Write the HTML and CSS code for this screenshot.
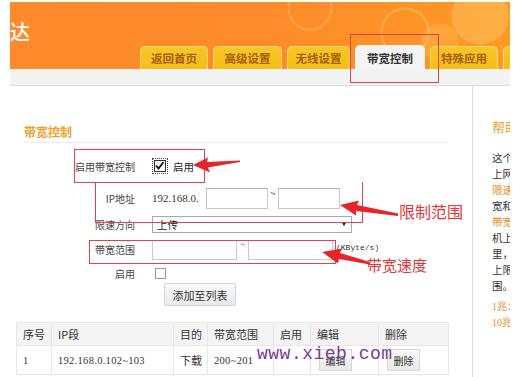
FILE: index.html
```html
<!DOCTYPE html>
<html lang="zh">
<head>
<meta charset="utf-8">
<title>带宽控制</title>
<link rel="stylesheet" href="styles.css">
</head>
<body>
<div class="page">
  <header class="header">
    <div class="logo">达</div>
    <nav class="tabs">
      <div class="tab w68">返回首页</div>
      <div class="tab w69">高级设置</div>
      <div class="tab w63">无线设置</div>
      <div class="tab active">带宽控制</div>
      <div class="tab w68">特殊应用</div>
      <div class="tab w60"></div>
    </nav>
  </header>
  <div class="subbar"></div>
  <div class="body">
    <main class="main">
      <h2 class="title">带宽控制</h2>
      <div class="form">
        <div class="lbl h34">启用带宽控制</div>
        <div class="val h34"><span class="cb checked"><svg viewBox="0 0 11 11" width="11" height="11"><path d="M2 5.5 L4.5 8.5 L9.5 2" fill="none" stroke="#111" stroke-width="1.8"/></svg></span><span class="cbtext">启用</span></div>

        <div class="lbl h30">IP地址</div>
        <div class="val h30"><span class="ipfix">192.168.0.</span><input class="inp w62" type="text"><span class="tilde">~</span><input class="inp w62" type="text"></div>

        <div class="lbl h23">限速方向</div>
        <div class="val h23"><div class="select"><span>上传</span><span class="caret"></span></div></div>

        <div class="lbl h27">带宽范围</div>
        <div class="val h27"><input class="inp w85" type="text"><span class="tilde2">~</span><input class="inp w85" type="text"><span class="unit">(KByte/s)</span></div>

        <div class="lbl h20">启用</div>
        <div class="val h20"><span class="cb plain"></span></div>
      </div>
      <div class="btnrow"><button class="btn" type="button">添加至列表</button></div>
      <table class="list">
        <colgroup>
          <col class="c1"><col class="c2"><col class="c3"><col class="c4"><col class="c5"><col class="c6"><col class="c7">
        </colgroup>
        <thead>
          <tr><th>序号</th><th>IP段</th><th>目的</th><th>带宽范围</th><th>启用</th><th>编辑</th><th>删除</th></tr>
        </thead>
        <tbody>
          <tr><td class="num">1</td><td class="num">192.168.0.102~103</td><td>下载</td><td class="num">200~201</td><td></td><td><button class="sbtn" type="button">编辑</button></td><td><button class="sbtn" type="button">删除</button></td></tr>
        </tbody>
      </table>
    </main>
    <aside class="side">
      <h3 class="side-title">帮助</h3>
      <div class="side-text">
        <p>这个</p>
        <p>上网</p>
        <p class="hl">限速</p>
        <p>宽和</p>
        <p class="hl">带宽</p>
        <p>机上</p>
        <p>里，</p>
        <p>上限</p>
        <p>围。</p>
      </div>
      <div class="side-note">
        <p>1兆：</p>
        <p>10兆</p>
      </div>
    </aside>
  </div>
</div>

<div class="annot">
  <div class="box box-tab"></div>
  <div class="box box-enable"></div>
  <div class="box box-ip"></div>
  <div class="box box-range"></div>
  <svg class="arrows" width="522" height="377" viewBox="0 0 522 377">
    <polygon points="193,165 208,157.5 207,162 240,160.5 240,162 208,167.5 210,172.5" fill="#e8232b"/>
    <polygon points="340,205 359,200.5 357,205 398,213.5 398,216 356,211 356,215.5" fill="#e8232b"/>
    <polygon points="322,252 342,248.5 340,253 370,262 370,264.5 339,259 338,263.5" fill="#e8232b"/>
  </svg>
  <div class="note note-ip">限制范围</div>
  <div class="note note-bw">带宽速度</div>
  <div class="watermark">www.xieb.com</div>
</div>
</body>
</html>
```

FILE: styles.css
```css
* { box-sizing: border-box; }
html, body { margin: 0; padding: 0; background: #fff; }
body {
  width: 522px;
  height: 377px;
  overflow: hidden;
  position: relative;
  font-family: "Noto Sans CJK SC", "Noto Sans", sans-serif;
  font-size: 11px;
  color: #333;
}
.page {
  width: 500px;
  margin: 2px 0 0 10px;
}

/* header */
.header {
  height: 67px;
  display: flex;
  overflow: hidden;
  background:
    radial-gradient(circle at 470px 14px, rgba(255,214,120,0.35) 0 28px, rgba(255,214,120,0) 29px),
    radial-gradient(circle at 395px 30px, rgba(255,220,140,0) 0 22px, rgba(255,220,140,0.35) 23px 24px, rgba(255,220,140,0) 25px),
    radial-gradient(circle at 300px 6px, rgba(255,220,140,0) 0 20px, rgba(255,220,140,0.3) 21px 22px, rgba(255,220,140,0) 23px),
    radial-gradient(circle at 430px 40px, rgba(255,210,110,0.25) 0 18px, rgba(255,210,110,0) 19px),
    linear-gradient(90deg, #fe8a2c 0%, #fe8c2a 55%, #fd9a26 100%);
}
.logo {
  width: 130px;
  flex: none;
  margin-top: 20px;
  font-size: 20px;
  line-height: 20px;
  color: #fff;
  font-weight: 500;
}
.tabs {
  display: flex;
  align-items: flex-end;
  gap: 5px;
  align-self: flex-end;
}
.tab {
  flex: none;
  height: 23px;
  border-radius: 5px 5px 0 0;
  background: linear-gradient(#f8c62a, #f5bd17);
  border: 1px solid #fbd672;
  border-bottom: none;
  color: #a85f05;
  font-size: 11.5px;
  font-weight: 700;
  display: flex;
  align-items: center;
  justify-content: center;
  white-space: nowrap;
  overflow: hidden;
}
.w68 { width: 68px; }
.w69 { width: 69px; }
.w63 { width: 63px; }
.w60 { width: 60px; }
.tab.active {
  width: 70px;
  height: 24px;
  background: #f4f4f4;
  border-color: #f4f4f4;
  color: #333;
}

.subbar {
  height: 17px;
  background: #f3f3f3;
  border-bottom: 1px solid #dcdcdc;
}

.body {
  display: flex;
  height: 291px;
}
.main {
  width: 462px;
  flex: none;
  padding-top: 39px;
}
.title {
  margin: 0 0 0 14px;
  width: 424px;
  padding-bottom: 3px;
  border-bottom: 1px solid #ececec;
  font-size: 12px;
  line-height: 14px;
  font-weight: 700;
  color: #eea22a;
}

/* form */
.form {
  margin-top: 6px;
  display: grid;
  grid-template-columns: 125px 1fr;
  column-gap: 17px;
}
.lbl {
  display: flex;
  align-items: center;
  justify-content: flex-end;
  font-size: 10px;
  color: #444;
  white-space: nowrap;
}
.val {
  display: flex;
  align-items: center;
  white-space: nowrap;
}
.h34 { height: 34px; }
.h30 { height: 30px; }
.h23 { height: 23px; }
.h27 { height: 27px; }
.h20 { height: 20px; }

.cb {
  display: inline-block;
  width: 11px;
  height: 11px;
  border: 1px solid #777;
  background: #fff;
}
.cb svg { display: block; margin: -1px 0 0 -1px; }
.cb.checked {
  margin-left: 2px;
  border-color: #333;
  outline: 1px dotted #444;
  outline-offset: 1px;
  width: 12px;
  height: 12px;
}
.cb.plain { margin-left: 3px; border-color: #999; }
.cbtext { margin-left: 7px; font-size: 10.5px; color: #222; }

.ipfix {
  width: 54px;
  font-family: "Liberation Serif", serif;
  font-size: 11px;
  color: #333;
}
.inp {
  height: 21px;
  border: 1px solid #c9c9c9;
  border-top-color: #b5b5b5;
  background: #fff;
  padding: 0;
  margin: 0;
  outline: none;
}
.w62 { width: 62px; }
.w85 { width: 85px; height: 20px; }
.tilde {
  width: 10px;
  padding-left: 2px;
  align-self: flex-start;
  margin-top: 2px;
  font-size: 10px;
  color: #555;
}
.tilde2 {
  width: 11px;
  padding-left: 3px;
  align-self: flex-start;
  margin-top: 2px;
  font-size: 9px;
  color: #555;
}
.unit {
  margin-left: 3px;
  margin-top: -5px;
  font-family: "Liberation Mono", monospace;
  font-size: 8px;
  color: #333;
}
.select {
  width: 200px;
  height: 17px;
  border: 1px solid #aaa;
  background: #fff;
  display: flex;
  align-items: center;
  justify-content: space-between;
  padding: 0 5px 0 4px;
  font-size: 10.5px;
  color: #222;
}
.caret {
  width: 0;
  height: 0;
  border-left: 2.5px solid transparent;
  border-right: 2.5px solid transparent;
  border-top: 3px solid #222;
}

.btnrow {
  height: 23px;
  padding-left: 154px;
}
.btn {
  width: 72px;
  height: 23px;
  margin: 0;
  padding: 0;
  border: 1px solid #d3d3d3;
  border-radius: 2px;
  background: linear-gradient(#fbfbfb, #e9e9e9);
  font-family: "Noto Sans CJK SC", sans-serif;
  font-size: 11px;
  color: #333;
}

/* table */
.list {
  margin: 16px 0 0 6px;
  width: 432px;
  border-collapse: collapse;
  table-layout: fixed;
}
.c1 { width: 35px; }
.c2 { width: 122px; }
.c3 { width: 34px; }
.c4 { width: 66px; }
.c5 { width: 37px; }
.c6 { width: 68px; }
.c7 { width: 70px; }
.list th, .list td {
  border: 1px solid #e6e6e6;
  text-align: left;
  padding: 0 0 0 6px;
  font-size: 11px;
  font-weight: 400;
  color: #333;
  white-space: nowrap;
}
.list th {
  height: 23px;
  background: #f4f4f4;
}
.list td { height: 29px; }
.list td.num {
  font-family: "Liberation Serif", serif;
  font-size: 10.5px;
  letter-spacing: 0.3px;
}
.sbtn {
  width: 33px;
  height: 22px;
  margin: 0 0 0 2px;
  padding: 0;
  border: 1px solid #d8d8d8;
  background: linear-gradient(#fafafa, #e8e8e8);
  font-family: "Noto Sans CJK SC", sans-serif;
  font-size: 10px;
  color: #333;
}

/* side */
.side {
  flex: 1;
  border-left: 1px solid #dcdcdc;
  padding: 33px 0 0 19px;
  overflow: hidden;
  white-space: nowrap;
}
.side-title {
  margin: 0;
  font-size: 13px;
  line-height: 16px;
  font-weight: 400;
  color: #f0a02a;
}
.side-text { margin-top: 15px; }
.side p {
  margin: 0;
  line-height: 16px;
  font-size: 10.5px;
  color: #333;
}
.side p.hl { color: #f08a1c; }
.side-note { margin-top: 5px; }
.side-note p {
  color: #f08a1c;
  font-family: "Liberation Serif", "Noto Sans CJK SC", serif;
  font-size: 10px;
}

/* annotations overlay */
.annot {
  position: absolute;
  left: 0;
  top: 0;
  width: 522px;
  height: 377px;
  pointer-events: none;
}
.box {
  position: absolute;
  border: 1px solid #e4414a;
}
.box-tab { left: 350px; top: 34px; width: 89px; height: 49px; }
.box-enable { left: 74px; top: 149px; width: 131px; height: 34px; }
.box-ip { left: 95px; top: 182px; width: 268px; height: 41px; border-top: none; }
.box-range { left: 89px; top: 240px; width: 247px; height: 24px; }
.arrows { position: absolute; left: 0; top: 0; }
.note {
  position: absolute;
  color: #e8323a;
  white-space: nowrap;
  font-family: "Noto Sans CJK SC", sans-serif;
}
.note-ip { left: 399px; top: 201px; font-size: 16px; line-height: 20px; }
.note-bw { left: 367px; top: 255px; font-size: 15px; line-height: 20px; }
.watermark {
  position: absolute;
  left: 257px;
  top: 343px;
  font-family: "Liberation Mono", monospace;
  font-size: 18px;
  line-height: 22px;
  letter-spacing: 0.5px;
  color: #7a3a9c;
  white-space: nowrap;
}
```
